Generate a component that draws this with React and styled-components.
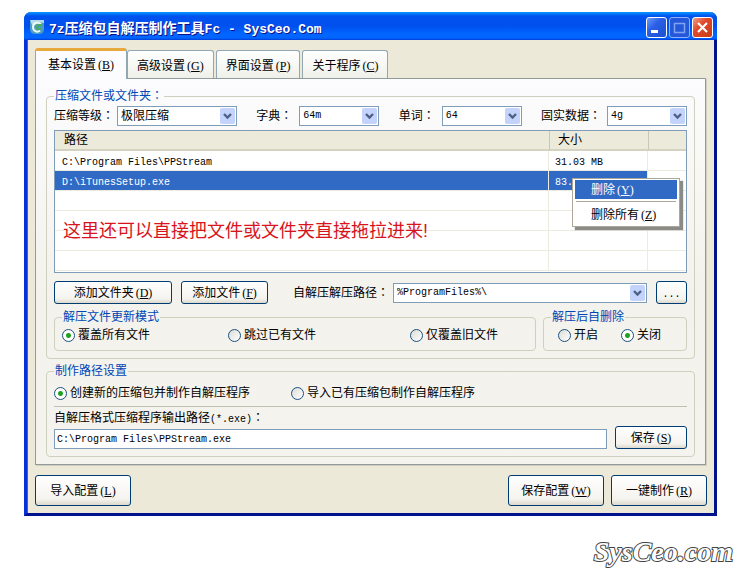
import React, { useState } from "react";
import styled, { createGlobalStyle, css } from "styled-components";

const GlobalStyle = createGlobalStyle`
  * {
    box-sizing: border-box;
  }
  body {
    margin: 0;
    background-color: #fff;
    color: #000;
    font: 12px/16px "Liberation Sans", "Noto Sans CJK SC", sans-serif;
  }
  button, input, select, table {
    font: inherit;
    color: inherit;
  }
`;

const Latin = styled.span`
  font-family: "Liberation Mono", monospace;
  font-size: 10px;
  line-height: 1;
`;

const Hotkey = styled.span`
  margin-left: 2px;
  font-family: "Liberation Serif", serif;
  line-height: 1;
`;

const Colon = styled.span`
  font-family: "Noto Sans CJK TC", sans-serif;
  line-height: 1;
`;

const Page = styled.div`
  padding: 12px 25px 12px 24px;
`;

const Window = styled.div`
  border: 3px solid #0831d9;
  border-top: none;
  border-right-color: #00138c;
  border-bottom-color: #00138c;
  border-radius: 7px 7px 0 0;
  background-color: #ece9d8;
  box-shadow: inset 1px 0 #166aee;
`;

const TitleBar = styled.header`
  display: flex;
  align-items: center;
  gap: 5px;
  height: 28px;
  margin: 0 -3px;
  padding: 2px 4px 0 6px;
  border-radius: 7px 7px 0 0;
  background: linear-gradient(#0997ff 0, #0053ee 4px, #0050ee 14px, #06f 22px, #06f 26px, #003dd7 28px);
`;

const Title = styled.h1`
  flex: 1;
  margin: 0;
  color: #fff;
  font: bold 14px/20px "Noto Sans CJK SC", sans-serif;
  text-shadow: 1px 1px #0f1089;
  white-space: pre;

  ${Latin} {
    font-size: 13px;
  }
`;

const TitleButtons = styled.div`
  display: flex;
  gap: 2px;
`;

const TitleButton = styled.button`
  width: 21px;
  height: 21px;
  padding: 0;
  border: 1px solid #fff;
  border-radius: 3px;
  background: ${(props) =>
    props.$close
      ? "linear-gradient(135deg, #f0a08a, #e0492a 40%, #c83c18)"
      : "linear-gradient(135deg, #6c9cff, #2a5fe6 40%, #1c4fd0)"};

  &:disabled {
    border-color: #8fb0f8;
    background: #2458d8;
  }
  svg {
    display: block;
  }
`;

const Body = styled.main`
  padding: 8px 8px 7px;
`;

const Tabs = styled.div`
  display: flex;
  align-items: flex-end;
  gap: 2px;
`;

const Tab = styled.button`
  position: relative;
  height: 28px;
  padding: 3px 9px 0;
  border: 1px solid #91a7b4;
  border-bottom: none;
  border-radius: 3px 3px 0 0;
  background: linear-gradient(#fff, #f0f0ea);

  ${(props) =>
    props.$active &&
    css`
      height: 31px;
      margin: 0 -2px -1px 0;
      padding: 0 12px;
      border-top: 3px solid #e8a93c;
      background: #fcfcfe;
    `}
`;

const Panel = styled.section`
  display: flex;
  flex-direction: column;
  gap: 4px;
  padding: 9px 10px 7px;
  border: 1px solid #919b9c;
  background: linear-gradient(#fcfcfe, #f3f2ec 55%, #f4f3ee);
  box-shadow: 1px 1px #d0cebf;
`;

const Group = styled.fieldset`
  min-width: 0;
  margin: 0;
  padding: ${(props) => props.$pad || "0 7px 7px"};
  border: 1px solid #d0d0bf;
  border-radius: 4px;
`;

const Legend = styled.legend`
  padding: 0 1px;
  color: #0046b5;
`;

const OptionsRow = styled.div`
  display: flex;
  justify-content: space-between;
  margin: 2px 0 4px;
`;

const Field = styled.label`
  display: flex;
  align-items: center;
`;

const FieldLabel = styled.span`
  width: ${(props) => props.$width || "auto"};
`;

const SelectBox = styled.span`
  position: relative;
  display: flex;
  width: ${(props) => props.$width || "auto"};
  flex: ${(props) => (props.$width ? "none" : 1)};

  svg {
    position: absolute;
    top: 2px;
    right: 2px;
    pointer-events: none;
  }
`;

const Select = styled.select`
  width: 100%;
  height: 20px;
  padding: 0 18px 0 3px;
  appearance: none;
  border: 1px solid #7f9db9;
  border-radius: 0;
  background-color: #fff;
  font-family: ${(props) => (props.$latin ? '"Liberation Mono", monospace' : "inherit")};
  font-size: ${(props) => (props.$latin ? "10px" : "12px")};
`;

const ListView = styled.div`
  position: relative;
  height: 143px;
  border: 1px solid #7f9db9;
  background-color: #fff;
`;

const Table = styled.table`
  width: 100%;
  table-layout: fixed;
  border-collapse: separate;
  border-spacing: 0;

  th {
    height: 20px;
    padding: 0 9px;
    border-bottom: 2px solid #d6d2c2;
    background-color: #ebeadb;
    font-weight: normal;
    text-align: left;
  }
  th + th {
    padding-left: 8px;
    border-left: 1px solid #cbc7b8;
  }
  td {
    height: 20px;
    padding: 0 0 0 6px;
    border-right: 1px solid #ecebe0;
    border-bottom: 1px solid #ecebe0;
    line-height: 16px;
  }
  td:first-child {
    padding-left: 7px;
  }
  td:last-child {
    border-right: none;
  }
`;

const Row = styled.tr`
  ${(props) =>
    props.$selected &&
    css`
      color: #fff;
      td {
        background-color: #316ac5;
      }
      td:last-child {
        background-color: #fff;
      }
    `}
`;

const DropHint = styled.p`
  position: absolute;
  top: 87px;
  left: 8px;
  margin: 0;
  color: #d8141c;
  font-size: 18px;
  line-height: 26px;
`;

const ContextMenu = styled.div`
  position: absolute;
  top: 47px;
  right: 6px;
  width: 108px;
  padding: 1px 2px 0;
  border: 1px solid #aca899;
  background-color: #fff;
  box-shadow: 3px 3px 1px #8a8a86;
`;

const MenuItem = styled.button`
  display: block;
  width: 100%;
  height: ${(props) => (props.$active ? "19px" : "22px")};
  padding: 0 0 0 16px;
  border: none;
  background-color: ${(props) => (props.$active ? "#316ac5" : "#fff")};
  color: ${(props) => (props.$active ? "#fff" : "#000")};
  text-align: left;
`;

const MenuLine = styled.hr`
  margin: 2px 1px;
  border: none;
  border-top: 1px solid #aca899;
`;

const Button = styled.button`
  width: ${(props) => props.$width};
  height: ${(props) => (props.$big ? "31px" : "23px")};
  padding: 0;
  border: 1px solid #003c74;
  border-radius: 3px;
  background: linear-gradient(#fff, #f4f3ee 80%, #dcd8cc);
  white-space: nowrap;
`;

const ActionRow = styled.div`
  display: flex;
  align-items: center;
  gap: 9px;
  margin: 8px 0 5px;
`;

const ExtractField = styled(Field)`
  flex: 1;
  margin-left: 16px;
`;

const GroupRow = styled.div`
  display: flex;
  gap: 7px;
`;

const ModeGroup = styled(Group)`
  flex: 1;
`;

const DeleteGroup = styled(Group)`
  flex: 0 0 144px;
`;

const Radios = styled.div`
  display: grid;
  grid-template-columns: ${(props) => props.$columns};
  padding-left: ${(props) => (props.$indent ? "7px" : "0")};
`;

const RadioLabel = styled.label`
  display: flex;
  align-items: center;
  gap: 3px;
  white-space: nowrap;
`;

const Radio = styled.input`
  appearance: none;
  width: 13px;
  height: 13px;
  margin: 0;
  border: 1px solid #1c5180;
  border-radius: 50%;
  background: linear-gradient(135deg, #dcdcd7, #fff);

  &:checked {
    background: radial-gradient(circle, #21a121 0, #21a121 2px, #fff 3px);
  }
`;

const Rule = styled.hr`
  margin: 5px 0 3px;
  border: none;
  border-top: 1px solid #c0bfb4;
`;

const SaveRow = styled.div`
  display: flex;
  align-items: flex-end;
  gap: 8px;
`;

const PathInput = styled.input`
  flex: 1;
  min-width: 0;
  height: 20px;
  padding: 0 2px;
  border: 1px solid #7f9db9;
  background-color: #fff;
  font-family: "Liberation Mono", monospace;
  font-size: 10px;
`;

const Footer = styled.footer`
  display: flex;
  gap: 7px;
  margin: 10px -1px 0 0;

  button:first-child {
    margin-right: auto;
  }
`;

const Brand = styled.div`
  margin-top: 18px;
  margin-right: -16px;
  color: #fff;
  font: italic bold 28px/36px "Liberation Serif", serif;
  text-align: right;
  -webkit-text-stroke: 2px #444;
  paint-order: stroke fill;
`;

const LogoIcon = () => (
  <svg width="14" height="14" viewBox="0 0 14 14">
    <path d="M0 0h14v9q0 5-5 5H5q-5 0-5-5z" fill="#4a9dc8" />
    <path d="M0 0h14v3L8 2 2 5z" fill="#b4dcec" />
    <path d="M11 4C8 1.5 3 3 3 7s4 6 7 3.5" fill="none" stroke="#eefaf0" strokeWidth="2" />
    <path d="M12 6c-2-2-6-1-5 2 1 2 3 1 3 0" fill="none" stroke="#4cac50" strokeWidth="2" />
  </svg>
);

const Chevron = () => (
  <svg width="15" height="16" viewBox="0 0 15 16">
    <rect width="15" height="16" rx="2" fill="#c3d3fb" />
    <path d="M4 6l3.5 3.5L11 6" fill="none" stroke="#4d6185" strokeWidth="2.4" />
  </svg>
);

const Caption = ({ text, hotkey }) => (
  <>
    {text}
    <Hotkey>
      (<u>{hotkey}</u>)
    </Hotkey>
  </>
);

const Combo = ({ label, labelWidth, width, value, latin, options = [] }) => (
  <Field>
    <FieldLabel $width={labelWidth}>
      {label}
      <Colon>：</Colon>
    </FieldLabel>
    <SelectBox $width={width}>
      <Select defaultValue={value} $latin={latin}>
        {[value, ...options].map((option) => (
          <option key={option}>{option}</option>
        ))}
      </Select>
      <Chevron />
    </SelectBox>
  </Field>
);

const RadioOption = ({ name, value, current, onPick }) => (
  <RadioLabel>
    <Radio type="radio" name={name} checked={current === value} onChange={() => onPick(value)} />
    {value}
  </RadioLabel>
);

const tabs = [
  { text: "基本设置", hotkey: "B" },
  { text: "高级设置", hotkey: "G" },
  { text: "界面设置", hotkey: "P" },
  { text: "关于程序", hotkey: "C" },
];

const files = [
  { path: "C:\\Program Files\\PPStream", size: "31.03 MB" },
  { path: "D:\\iTunesSetup.exe", size: "83.44 MB" },
  { path: "", size: "" },
  { path: "", size: "" },
  { path: "", size: "" },
  { path: "", size: "" },
];

const App = () => {
  const [tab, setTab] = useState("B");
  const [mode, setMode] = useState("覆盖所有文件");
  const [autoDelete, setAutoDelete] = useState("关闭");
  const [source, setSource] = useState("创建新的压缩包并制作自解压程序");
  const [output, setOutput] = useState("C:\\Program Files\\PPStream.exe");

  return (
    <Page>
      <GlobalStyle />
      <Window>
        <TitleBar>
          <LogoIcon />
          <Title>
            <Latin>7z</Latin>压缩包自解压制作工具<Latin>Fc - SysCeo.Com</Latin>
          </Title>
          <TitleButtons>
            <TitleButton aria-label="最小化">
              <svg width="19" height="19">
                <path d="M4 13.5h7" stroke="#fff" strokeWidth="3" />
              </svg>
            </TitleButton>
            <TitleButton aria-label="最大化" disabled>
              <svg width="19" height="19">
                <path d="M4.5 5v9.5h10V5M4 5.5h11" fill="none" stroke="#7fa2f2" strokeWidth="1.5" />
              </svg>
            </TitleButton>
            <TitleButton aria-label="关闭" $close>
              <svg width="19" height="19">
                <path d="M5 5l9 9M14 5l-9 9" stroke="#fff" strokeWidth="2.2" />
              </svg>
            </TitleButton>
          </TitleButtons>
        </TitleBar>
        <Body>
          <Tabs>
            {tabs.map((item) => (
              <Tab key={item.hotkey} $active={tab === item.hotkey} onClick={() => setTab(item.hotkey)}>
                <Caption {...item} />
              </Tab>
            ))}
          </Tabs>
          <Panel>
            <Group>
              <Legend>
                压缩文件或文件夹<Colon>：</Colon>
              </Legend>
              <OptionsRow>
                <Combo label="压缩等级" labelWidth="63px" width="120px" value="极限压缩" />
                <Combo label="字典" labelWidth="43px" width="80px" value="64m" latin />
                <Combo label="单词" labelWidth="43px" width="80px" value="64" latin />
                <Combo label="固实数据" labelWidth="66px" width="80px" value="4g" latin />
              </OptionsRow>
              <ListView>
                <Table>
                  <colgroup>
                    <col />
                    <col width="99" />
                    <col width="38" />
                  </colgroup>
                  <thead>
                    <tr>
                      <th>路径</th>
                      <th>大小</th>
                      <th />
                    </tr>
                  </thead>
                  <tbody>
                    {files.map((file, index) => (
                      <Row key={index} $selected={index === 1}>
                        <td>
                          <Latin>{file.path}</Latin>
                        </td>
                        <td>
                          <Latin>{file.size}</Latin>
                        </td>
                        <td />
                      </Row>
                    ))}
                  </tbody>
                </Table>
                <DropHint>这里还可以直接把文件或文件夹直接拖拉进来!</DropHint>
                <ContextMenu>
                  <MenuItem $active>
                    <Caption text="删除" hotkey="Y" />
                  </MenuItem>
                  <MenuLine />
                  <MenuItem>
                    <Caption text="删除所有" hotkey="Z" />
                  </MenuItem>
                </ContextMenu>
              </ListView>
              <ActionRow>
                <Button $width="118px">
                  <Caption text="添加文件夹" hotkey="D" />
                </Button>
                <Button $width="87px">
                  <Caption text="添加文件" hotkey="F" />
                </Button>
                <ExtractField>
                  <FieldLabel $width="100px">
                    自解压解压路径<Colon>：</Colon>
                  </FieldLabel>
                  <SelectBox>
                    <Select $latin>
                      <option>%ProgramFiles%\</option>
                    </Select>
                    <Chevron />
                  </SelectBox>
                </ExtractField>
                <Button $width="31px">
                  <Latin>...</Latin>
                </Button>
              </ActionRow>
              <GroupRow>
                <ModeGroup $pad="2px 7px 7px">
                  <Legend>解压文件更新模式</Legend>
                  <Radios $columns="166px 182px 1fr">
                    {["覆盖所有文件", "跳过已有文件", "仅覆盖旧文件"].map((value) => (
                      <RadioOption key={value} name="mode" value={value} current={mode} onPick={setMode} />
                    ))}
                  </Radios>
                </ModeGroup>
                <DeleteGroup $pad="2px 7px 7px">
                  <Legend>解压后自删除</Legend>
                  <Radios $columns="63px 1fr" $indent>
                    {["开启", "关闭"].map((value) => (
                      <RadioOption key={value} name="delete" value={value} current={autoDelete} onPick={setAutoDelete} />
                    ))}
                  </Radios>
                </DeleteGroup>
              </GroupRow>
            </Group>
            <Group $pad="6px 7px 7px">
              <Legend>制作路径设置</Legend>
              <Radios $columns="237px 1fr">
                {["创建新的压缩包并制作自解压程序", "导入已有压缩包制作自解压程序"].map((value) => (
                  <RadioOption key={value} name="source" value={value} current={source} onPick={setSource} />
                ))}
              </Radios>
              <Rule />
              <label htmlFor="output">
                自解压格式压缩程序输出路径<Latin>(*.exe)</Latin>
                <Colon>：</Colon>
              </label>
              <SaveRow>
                <PathInput id="output" value={output} onChange={(e) => setOutput(e.target.value)} />
                <Button $width="72px">
                  <Caption text="保存" hotkey="S" />
                </Button>
              </SaveRow>
            </Group>
          </Panel>
          <Footer>
            <Button $width="96px" $big>
              <Caption text="导入配置" hotkey="L" />
            </Button>
            <Button $width="96px" $big>
              <Caption text="保存配置" hotkey="W" />
            </Button>
            <Button $width="96px" $big>
              <Caption text="一键制作" hotkey="R" />
            </Button>
          </Footer>
        </Body>
      </Window>
      <Brand>SysCeo.com</Brand>
    </Page>
  );
};

export default App;
